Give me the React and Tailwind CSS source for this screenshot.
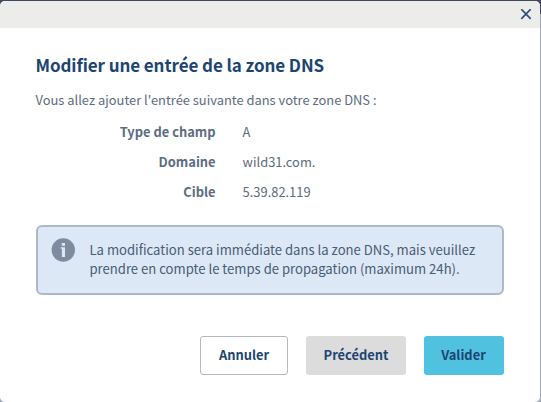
const fields = [
  { label: 'Type de champ', value: 'A' },
  { label: 'Domaine', value: 'wild31.com.' },
  { label: 'Cible', value: '5.39.82.119' },
];

function CloseIcon() {
  return (
    <svg width="12" height="12" viewBox="0 0 12 12" fill="none" stroke="#2f4f78" strokeWidth="1.7">
      <path d="M1.3 0.2 10.7 9.8M10.7 0.2 1.3 9.8" />
    </svg>
  );
}

function InfoIcon() {
  return (
    <svg width="24" height="24" viewBox="0 0 24 24" className="shrink-0">
      <circle cx="12.3" cy="12" r="11.7" fill="#7f8c9f" />
      <path d="M10.8 5h3.2v2.8h-3.2zM9.8 9.2H14V19h-3.1v-8.2H9.8z" fill="#dde8f6" />
    </svg>
  );
}

export default function App() {
  return (
    <div className="h-[402px] w-[541px] overflow-hidden bg-linear-to-b from-[#3f4961] from-[14px] to-[#a0a8b9] to-[14px] pt-px pr-px font-['Noto_Sans_CJK_SC','Source_Sans_Pro',sans-serif] text-[12.9px] text-[#5c6c80]">
      <div className="flex h-full flex-col overflow-hidden rounded-[5px] bg-white">
        <header className="flex h-[27px] shrink-0 items-center justify-end bg-[#ececea] pr-2">
          <button aria-label="Fermer"><CloseIcon /></button>
        </header>
        <main className="flex flex-col pt-[25px] pr-9 pl-9">
          <h1 className="-ml-[0.5px] h-6 text-[17px] leading-6 font-bold tracking-[-0.08px] whitespace-nowrap text-[#1c4572]">
            Modifier une entrée de la zone DNS
          </h1>
          <p className="mt-[13px] -ml-[0.5px] h-5 leading-5 whitespace-nowrap">
            Vous allez ajouter l'entrée suivante dans votre zone DNS :
          </p>
          <dl className="mt-[7px]">
            {fields.map((f) => (
              <div key={f.label} className="flex h-[30px] items-center leading-5">
                <dt className="w-[179.6px] text-right font-bold">{f.label}</dt>
                <dd className="ml-[27px]">{f.value}</dd>
              </div>
            ))}
          </dl>
          <div className="mt-[18px] flex h-[70px] gap-[14.5px] rounded-md border-2 border-[#adb9c9] bg-[#dde8f6] pt-[11px] pl-[13px] text-[13.1px] text-[#485c74]">
            <InfoIcon />
            <p className="pt-[2px] leading-[19px] whitespace-nowrap">
              La modification sera immédiate dans la zone DNS, mais veuillez<br />
              prendre en compte le temps de propagation (maximum 24h).
            </p>
          </div>
          <div className="mt-[41px] flex justify-end gap-[18px] font-bold text-[#1c4572]">
            <button className="h-[39px] w-[88px] rounded-[3px] border border-[#b5b8bb] bg-white pb-px">Annuler</button>
            <button className="h-[39px] w-[100px] rounded-[3px] bg-[#dcdcdc] pb-px">Précédent</button>
            <button className="h-[39px] w-[80px] rounded-[3px] bg-[#50c2e0] px-0 pr-px pb-px">Valider</button>
          </div>
        </main>
      </div>
    </div>
  );
}
